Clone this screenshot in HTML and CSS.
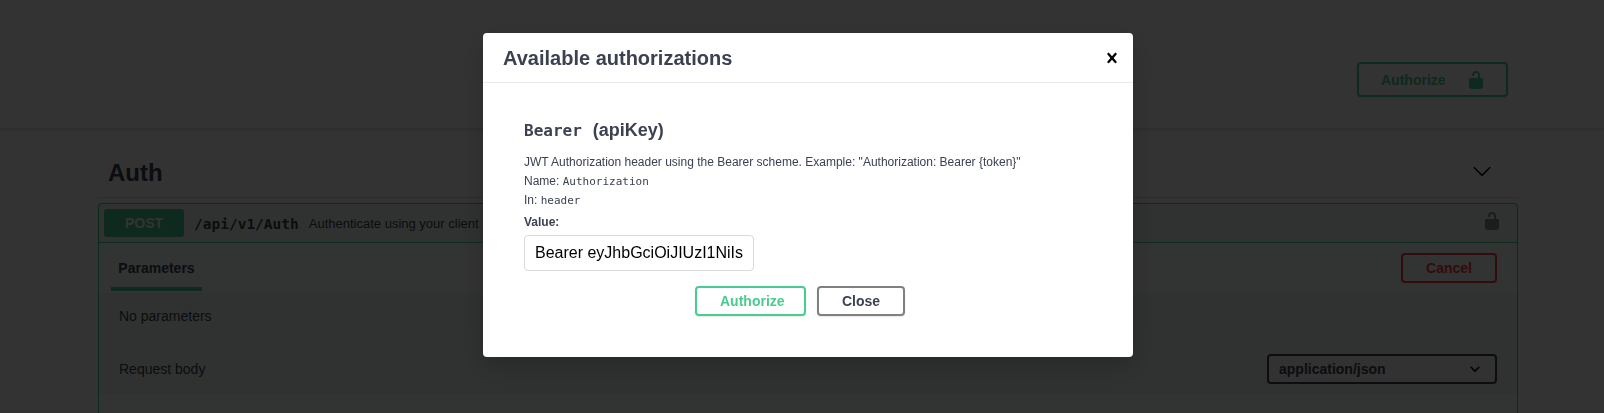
FILE: index.html
```html
<!DOCTYPE html>
<html lang="en">
<head>
    <meta charset="UTF-8">
    <title>Swagger UI</title>
    <link rel="stylesheet" href="styles.css">
</head>
<body>
    <div class="scheme-bar">
        <button class="btn-authorize">
            <span>Authorize</span>
            <svg class="lock" viewBox="0 0 20 20"><path d="M15.8 8H14V5.6C14 2.703 12.665 1 10 1 7.334 1 6 2.703 6 5.6V6h2v-.801C8 3.754 8.797 3 10 3c1.203 0 2 .754 2 2.199V8H4c-.553 0-1 .646-1 1.199V17c0 .549.428 1.139.951 1.307l1.197.387C5.672 18.861 6.55 19 7.1 19h5.8c.549 0 1.428-.139 1.951-.307l1.196-.387c.524-.167.953-.757.953-1.306V9.199C17 8.646 16.352 8 15.8 8z"/></svg>
        </button>
    </div>

    <div class="wrapper">
        <div class="tag-header">
            <h3>Auth</h3>
            <svg class="tag-arrow" viewBox="0 0 20 20"><path d="M17.418 6.109c.272-.268.709-.268.979 0s.271.701 0 .969l-7.908 7.83c-.27.268-.707.268-.979 0l-7.908-7.83c-.27-.268-.27-.701 0-.969.271-.268.709-.268.979 0L10 13.25l7.418-7.141z"/></svg>
        </div>

        <div class="opblock">
            <div class="summary">
                <span class="method">POST</span>
                <span class="path">/api/v1/Auth</span>
                <span class="summary-text">Authenticate using your client</span>
                <svg class="op-lock" viewBox="0 0 20 20"><path d="M15.8 8H14V5.6C14 2.703 12.665 1 10 1 7.334 1 6 2.703 6 5.6V6h2v-.801C8 3.754 8.797 3 10 3c1.203 0 2 .754 2 2.199V8H4c-.553 0-1 .646-1 1.199V17c0 .549.428 1.139.951 1.307l1.197.387C5.672 18.861 6.55 19 7.1 19h5.8c.549 0 1.428-.139 1.951-.307l1.196-.387c.524-.167.953-.757.953-1.306V9.199C17 8.646 16.352 8 15.8 8z"/></svg>
            </div>
            <div class="section-header">
                <div class="tab">Parameters</div>
                <button class="btn-cancel">Cancel</button>
            </div>
            <div class="no-params">No parameters</div>
            <div class="request-body">
                <span>Request body</span>
                <div class="content-select">
                    <span>application/json</span>
                    <svg class="select-arrow" viewBox="0 0 20 20"><path d="M13.418 7.859a.695.695 0 0 1 .978 0 .68.68 0 0 1 0 .969l-3.908 3.83a.697.697 0 0 1-.979 0l-3.908-3.83a.68.68 0 0 1 0-.969.697.697 0 0 1 .979 0L10 11l3.418-3.141z"/></svg>
                </div>
            </div>
            <div class="body-rest"></div>
        </div>
    </div>

    <div class="backdrop">
        <div class="modal">
            <div class="modal-header">
                <h3>Available authorizations</h3>
                <svg class="close" viewBox="0 0 20 20"><path d="M14.348 14.849c-.469.469-1.229.469-1.697 0L10 11.819l-2.651 3.029c-.469.469-1.229.469-1.697 0-.469-.469-.469-1.229 0-1.697l2.758-3.15-2.759-3.152c-.469-.469-.469-1.228 0-1.697.469-.469 1.228-.469 1.697 0L10 8.183l2.651-3.031c.469-.469 1.228-.469 1.697 0 .469.469.469 1.229 0 1.697l-2.758 3.152 2.758 3.15c.469.469.469 1.229 0 1.698z"/></svg>
            </div>
            <div class="modal-body">
                <h4><code>Bearer</code>(apiKey)</h4>
                <p>JWT Authorization header using the Bearer scheme. Example: "Authorization: Bearer {token}"</p>
                <p>Name: <code>Authorization</code></p>
                <p>In: <code>header</code></p>
                <label for="token">Value:</label>
                <input id="token" type="text" value="Bearer eyJhbGciOiJIUzI1NiIsInR5cCI6IkpXVCJ9">
                <div class="modal-actions">
                    <button class="btn-modal-authorize">Authorize</button>
                    <button class="btn-close">Close</button>
                </div>
            </div>
        </div>
    </div>
</body>
</html>
```

FILE: styles.css
```css
html, body {
    height: 100%;
    overflow: hidden;
}
body {
    margin: 0;
    background: #fff;
    font-family: "Liberation Sans", Arial, sans-serif;
    color: #3b4151;
}
button {
    font-family: inherit;
    font-weight: bold;
    background: transparent;
    cursor: pointer;
}

/* page behind the dialog */
.scheme-bar {
    display: flex;
    justify-content: flex-end;
    box-sizing: border-box;
    height: 129px;
    padding: 62px 96px 0 0;
    border-bottom: 1px solid #e8e8e8;
    box-shadow: 0 1px 2px rgba(0, 0, 0, 0.15);
}
.btn-authorize {
    display: flex;
    align-items: center;
    justify-content: space-between;
    box-sizing: border-box;
    width: 151px;
    height: 35px;
    padding: 0 23px 0 22px;
    border: 2px solid #49cc90;
    border-radius: 4px;
    color: #49cc90;
    font-size: 14px;
    box-shadow: 0 1px 2px rgba(0, 0, 0, 0.1);
}
.lock {
    width: 20px;
    height: 20px;
    fill: #49cc90;
    margin-right: -3px;
}
.wrapper {
    padding: 0 86px 0 98px;
}
.tag-header {
    display: flex;
    align-items: center;
    justify-content: space-between;
    box-sizing: border-box;
    height: 69px;
    padding: 20px 26px 0 10px;
    border-bottom: 1px solid #d8dbdf;
}
.tag-header h3 {
    margin: 0;
    font-size: 24px;
    font-weight: bold;
}
.tag-arrow {
    width: 20px;
    height: 20px;
    margin-bottom: 4px;
}
.opblock {
    margin-top: 5px;
    border: 1px solid #49cc90;
    border-bottom: 0;
    border-radius: 4px 4px 0 0;
    background: rgba(73, 204, 144, 0.1);
}
.summary {
    display: flex;
    align-items: center;
    box-sizing: border-box;
    height: 39px;
    padding: 0 15px 0 5px;
    border-bottom: 1px solid #49cc90;
    white-space: nowrap;
}
.method {
    box-sizing: border-box;
    width: 80px;
    height: 28px;
    line-height: 28px;
    border-radius: 3px;
    background: #49cc90;
    color: #fff;
    font-size: 14px;
    font-weight: bold;
    text-align: center;
}
.path {
    margin: 2px 0 0 10px;
    font-family: "DejaVu Sans Mono", monospace;
    font-size: 14.5px;
    font-weight: bold;
}
.summary-text {
    margin-left: 10px;
    font-size: 13px;
}
.op-lock {
    width: 20px;
    height: 20px;
    margin: 0 0 4px auto;
    fill: #3b4151;
    opacity: 0.6;
}
.section-header {
    display: flex;
    align-items: center;
    justify-content: space-between;
    height: 50px;
    padding: 0 20px 0 12px;
    background: rgba(255, 255, 255, 0.8);
}
.tab {
    align-self: flex-start;
    box-sizing: border-box;
    width: 91px;
    height: 48px;
    padding-top: 17px;
    border-bottom: 4px solid #49cc90;
    font-size: 14px;
    font-weight: bold;
    text-align: center;
}
.btn-cancel {
    width: 96px;
    height: 30px;
    border: 2px solid #f93e3e;
    border-radius: 4px;
    color: #f93e3e;
    font-size: 14px;
}
.no-params {
    height: 50px;
    box-sizing: border-box;
    padding: 15px 0 0 20px;
    font-size: 14px;
}
.request-body {
    display: flex;
    align-items: center;
    justify-content: space-between;
    height: 51px;
    padding: 0 20px;
    font-size: 14px;
}
.content-select {
    display: flex;
    align-items: center;
    justify-content: space-between;
    box-sizing: border-box;
    width: 230px;
    height: 30px;
    padding: 0 15px 0 10px;
    border: 2px solid #41444e;
    border-radius: 4px;
    background: #f7f7f7;
    font-size: 14px;
    font-weight: bold;
}
.select-arrow {
    width: 20px;
    height: 20px;
    margin-right: -5px;
}
.body-rest {
    height: 19px;
    background: rgba(255, 255, 255, 0.8);
}

/* dialog */
.backdrop {
    position: fixed;
    top: 0;
    right: 0;
    bottom: 0;
    left: 0;
    display: flex;
    justify-content: center;
    align-items: flex-start;
    box-sizing: border-box;
    padding: 33px 0 0 12px;
    background: rgba(0, 0, 0, 0.8);
}
.modal {
    box-sizing: border-box;
    width: 650px;
    height: 324px;
    border-radius: 4px;
    background: #fff;
    box-shadow: 0 10px 30px rgba(0, 0, 0, 0.2);
}
.modal-header {
    display: flex;
    align-items: center;
    justify-content: space-between;
    box-sizing: border-box;
    height: 50px;
    padding: 1px 11px 0 20px;
    border-bottom: 1px solid #ebebeb;
}
.modal-header h3 {
    margin: 0;
    font-size: 20px;
    font-weight: bold;
}
.close {
    width: 20px;
    height: 20px;
    margin-top: -1px;
    fill: #000;
}
.modal-body {
    padding: 37px 41px 0;
}
.modal-body h4 {
    margin: 0 0 12px;
    font-size: 18px;
    line-height: 20px;
    font-weight: bold;
    white-space: nowrap;
}
.modal-body h4 code {
    margin-right: 11px;
    font-family: "DejaVu Sans Mono", monospace;
    font-size: 16px;
}
.modal-body p {
    margin: 0;
    font-size: 12px;
    line-height: 19px;
}
.modal-body p code {
    font-family: "DejaVu Sans Mono", monospace;
    font-size: 11px;
}
.modal-body label {
    display: block;
    margin-top: 5px;
    font-size: 12px;
    line-height: 15px;
    font-weight: bold;
}
.modal-body input {
    display: block;
    box-sizing: border-box;
    width: 230px;
    height: 36px;
    margin-top: 5px;
    padding: 8px 10px;
    border: 1px solid #d9d9d9;
    border-radius: 4px;
    font-family: inherit;
    font-size: 16px;
    color: #000;
}
.modal-actions {
    display: flex;
    justify-content: center;
    gap: 11px;
    margin-top: 15px;
    padding-right: 16px;
}
.modal-actions button {
    box-sizing: border-box;
    height: 30px;
    border-radius: 4px;
    font-size: 14px;
    box-shadow: 0 1px 2px rgba(0, 0, 0, 0.1);
}
.btn-modal-authorize {
    width: 111px;
    padding: 0 21px 0 23px;
    border: 2px solid #49cc90;
    color: #49cc90;
}
.btn-close {
    width: 88px;
    border: 2px solid #808080;
    color: #3b4151;
}
```
